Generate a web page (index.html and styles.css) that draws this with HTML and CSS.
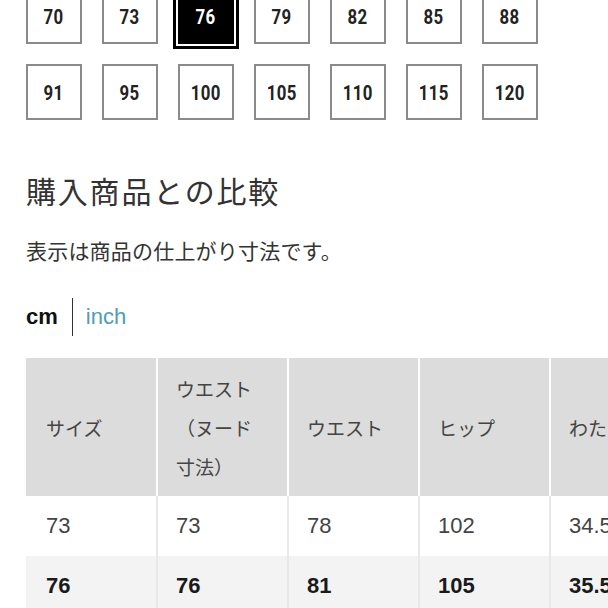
FILE: index.html
```html
<!DOCTYPE html>
<html lang="ja">
<head>
<meta charset="utf-8">
<link rel="stylesheet" href="styles.css">
</head>
<body>
<div class="page">
  <div class="sizes">
    <div class="size"><span class="num">70</span></div>
    <div class="size"><span class="num">73</span></div>
    <div class="size selected"><span class="num">76</span></div>
    <div class="size"><span class="num">79</span></div>
    <div class="size"><span class="num">82</span></div>
    <div class="size"><span class="num">85</span></div>
    <div class="size"><span class="num">88</span></div>
    <div class="size"><span class="num">91</span></div>
    <div class="size"><span class="num">95</span></div>
    <div class="size"><span class="num">100</span></div>
    <div class="size"><span class="num">105</span></div>
    <div class="size"><span class="num">110</span></div>
    <div class="size"><span class="num">115</span></div>
    <div class="size"><span class="num">120</span></div>
  </div>

  <h2 class="title">購入商品との比較</h2>
  <p class="note">表示は商品の仕上がり寸法です。</p>

  <div class="units">
    <span class="unit active">cm</span>
    <span class="divider"></span>
    <span class="unit link">inch</span>
  </div>

  <div class="chart-wrap">
    <table class="chart">
      <colgroup>
        <col class="c1"><col class="c"><col class="c"><col class="c"><col class="c">
      </colgroup>
      <thead>
        <tr>
          <th>サイズ</th>
          <th>ウエスト<br>（ヌード<br>寸法）</th>
          <th>ウエスト</th>
          <th>ヒップ</th>
          <th>わた</th>
        </tr>
      </thead>
      <tbody>
        <tr class="r1">
          <td>73</td><td>73</td><td>78</td><td>102</td><td>34.5</td>
        </tr>
        <tr class="r2">
          <td>76</td><td>76</td><td>81</td><td>105</td><td>35.5</td>
        </tr>
      </tbody>
    </table>
  </div>
</div>
</body>
</html>
```

FILE: styles.css
```css
html, body {
  margin: 0;
  padding: 0;
  background: #fff;
  overflow: hidden;
}

body {
  width: 608px;
  height: 608px;
  font-family: "Liberation Sans", "Noto Sans CJK JP", sans-serif;
  color: #333;
}

.page {
  padding-left: 26px;
}

.sizes {
  display: grid;
  grid-template-columns: repeat(7, 56px);
  grid-auto-rows: 56px;
  column-gap: 20px;
  row-gap: 20px;
  margin-top: -12px;
}

.size {
  box-sizing: border-box;
  border: 2px solid #8a8a8a;
  background: #fff;
  display: flex;
  align-items: center;
  justify-content: center;
  font-family: "Roboto", "DejaVu Sans", sans-serif;
  font-weight: bold;
  font-size: 21px;
  color: #222;
  padding-top: 1px;
}

.num {
  display: inline-block;
  transform: scaleX(0.8);
  letter-spacing: 0.5px;
}

.size.selected {
  background: #000;
  border-color: #000;
  color: #fff;
  box-shadow: 0 0 0 2px #fff, 0 0 0 5px #000;
}

.title {
  margin: 49px 0 0;
  font-family: "Noto Sans CJK JP", sans-serif;
  font-weight: normal;
  font-size: 30px;
  line-height: 42px;
  color: #333;
  letter-spacing: 1.8px;
}

.note {
  margin: 25px 0 0;
  font-family: "Noto Sans CJK JP", sans-serif;
  font-size: 21px;
  line-height: 28px;
  color: #333;
  letter-spacing: 0.2px;
}

.units {
  display: flex;
  align-items: center;
  height: 38px;
  margin-top: 34px;
  font-size: 22px;
}

.unit.active {
  color: #111;
  font-weight: bold;
}

.divider {
  width: 1px;
  height: 38px;
  background: #333;
  margin: 0 13px 0 14px;
}

.unit.link {
  color: #4e9db1;
}

.chart-wrap {
  margin-top: 22px;
  width: 582px;
  overflow: hidden;
}

.chart {
  border-collapse: separate;
  border-spacing: 0;
  table-layout: fixed;
  width: 654px;
  font-size: 20px;
}

.chart col.c1 { width: 130px; }
.chart col.c { width: 131px; }

.chart th,
.chart td {
  text-align: left;
  padding: 0 20px;
  font-weight: normal;
  white-space: nowrap;
}

.chart th + th,
.chart td + td {
  padding-left: 18px;
}

.chart th {
  background: #dcdcdc;
  height: 138px;
  box-sizing: border-box;
  color: #444;
  line-height: 39px;
  font-family: "Noto Sans CJK JP", sans-serif;
  font-size: 19px;
  border-left: 2px solid #fff;
}

.chart th:first-child {
  border-left: 0;
}

.chart td {
  height: 60px;
  box-sizing: border-box;
  font-size: 22px;
  border-left: 2px solid #e8e8e8;
}

.chart td:first-child {
  border-left: 0;
}

.chart .r1 td {
  background: #fff;
  color: #444;
}

.chart .r2 td {
  background: #f3f3f3;
  color: #1a1a1a;
  font-weight: bold;
}
```
